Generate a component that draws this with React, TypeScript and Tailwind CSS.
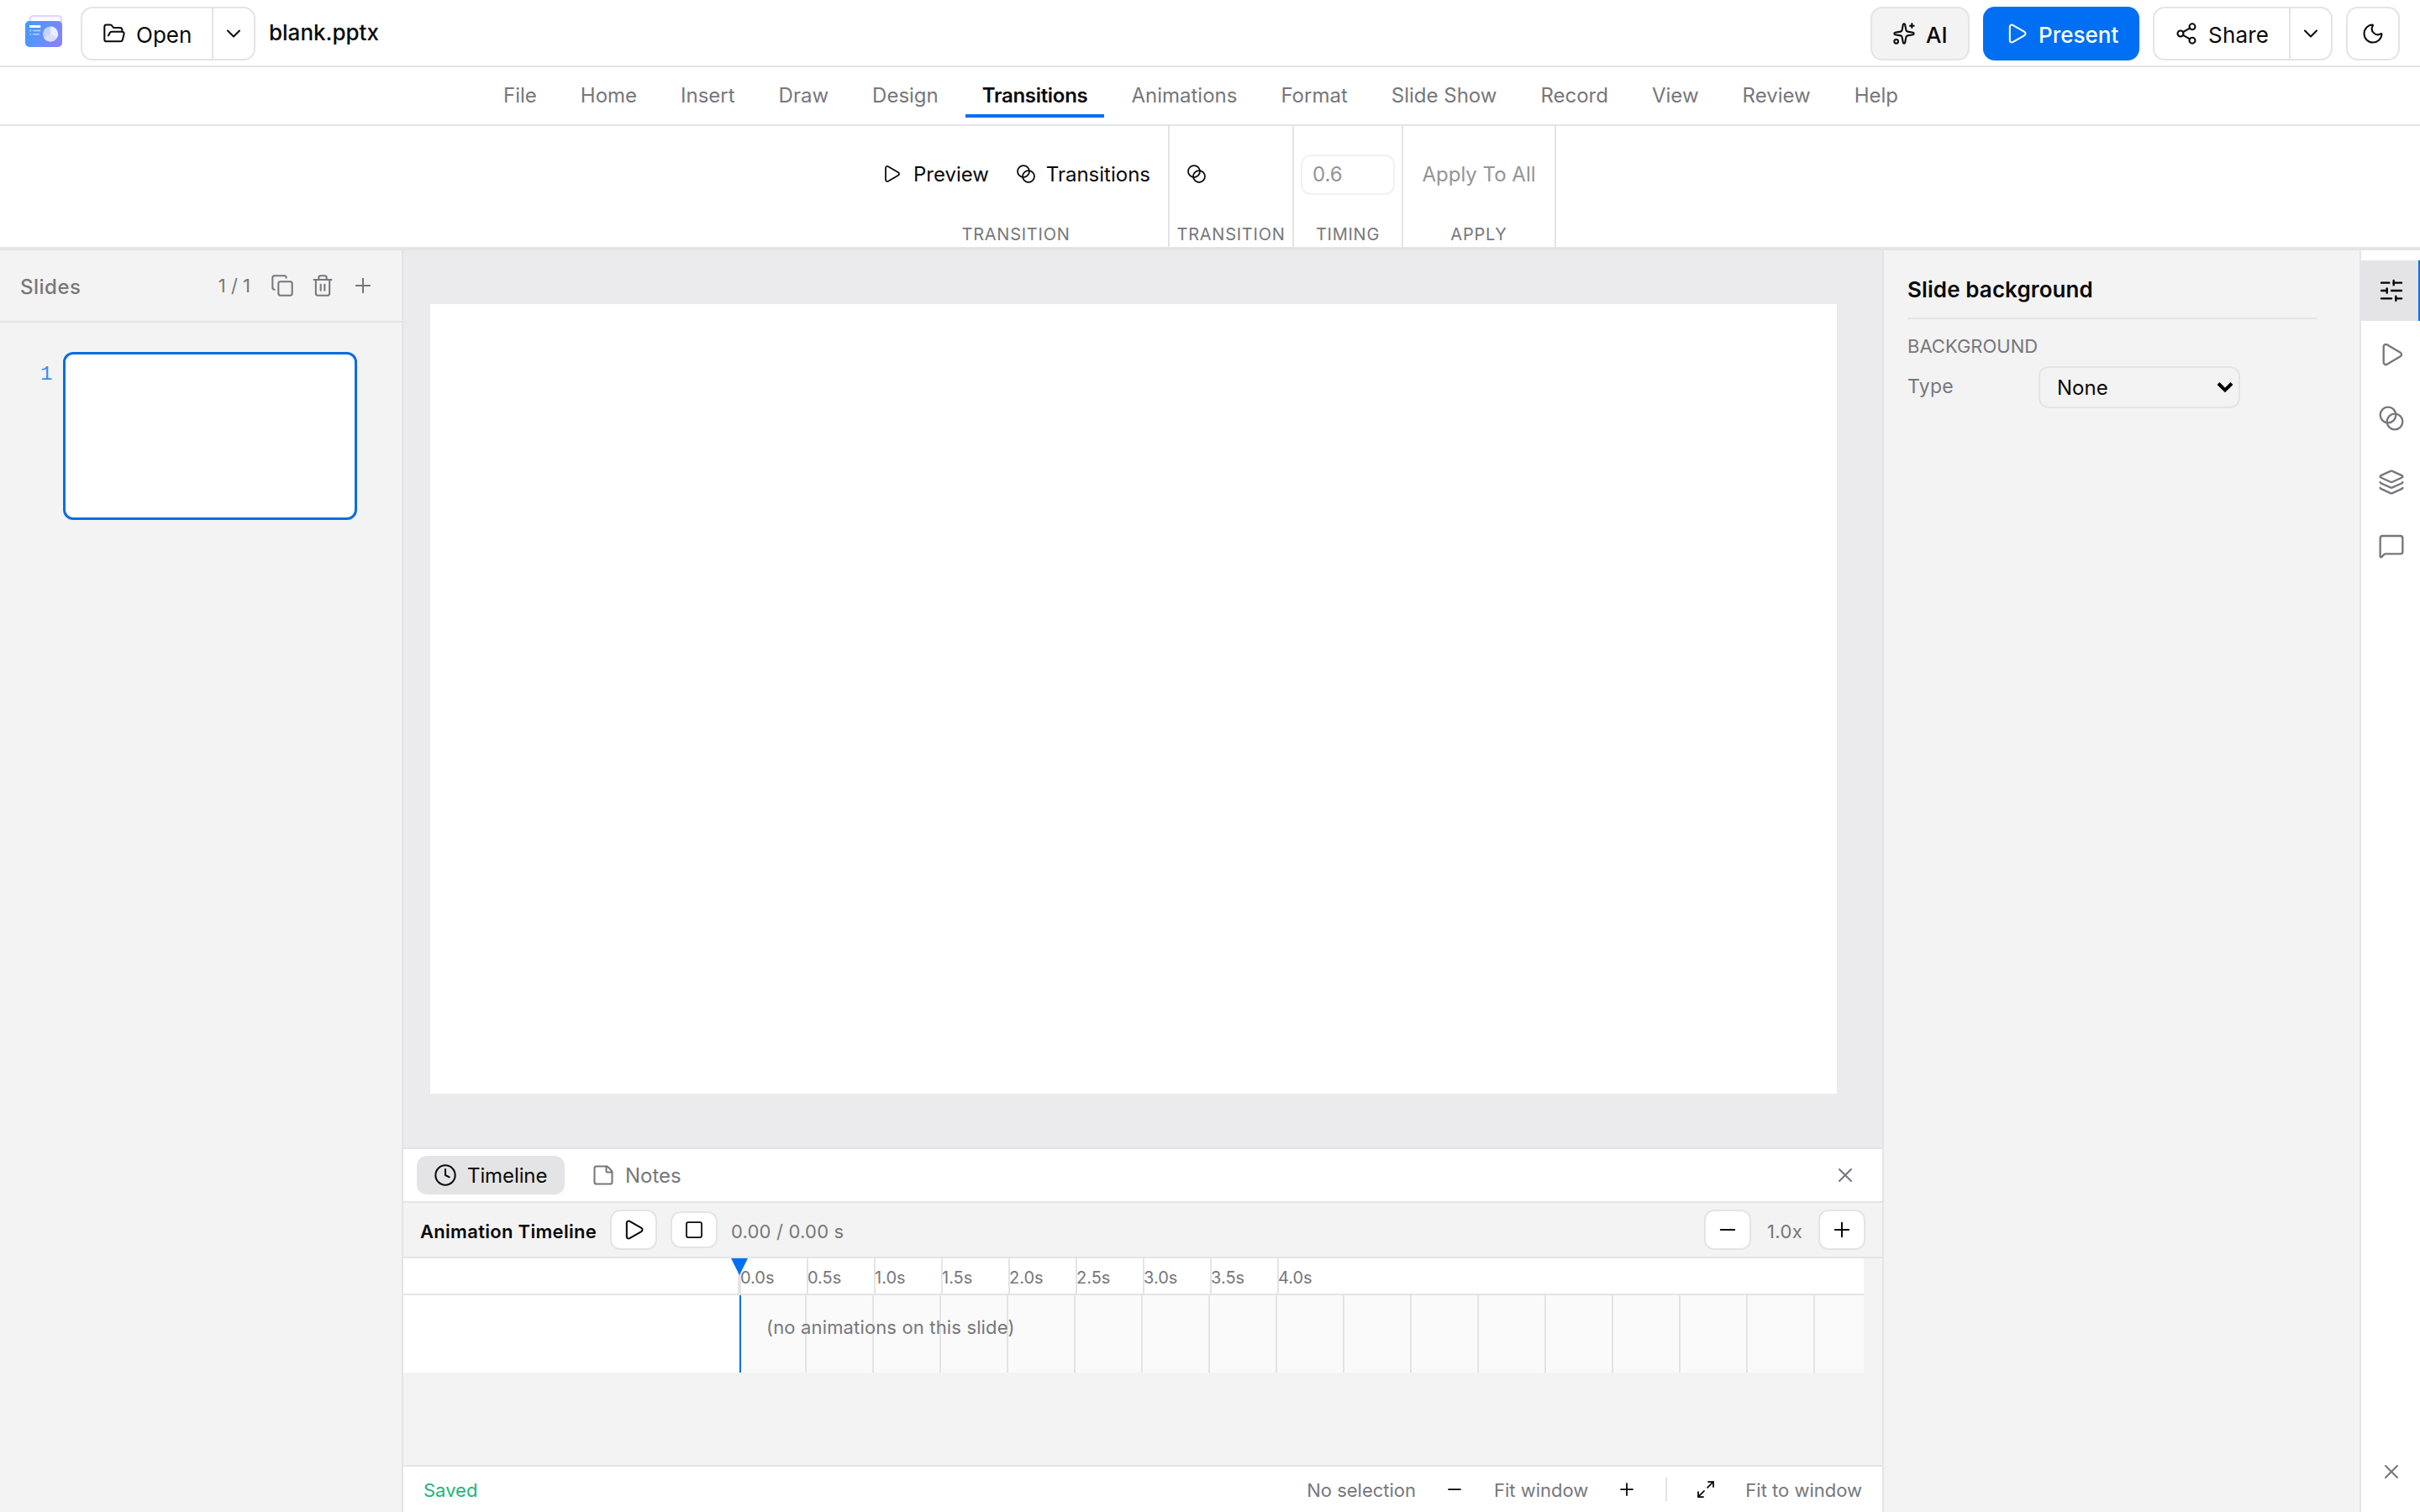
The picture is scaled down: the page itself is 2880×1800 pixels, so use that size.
import React from 'react'
import {
  Blend,
  ChevronDown,
  Clock,
  Copy,
  FolderOpen,
  Layers,
  Maximize2,
  MessageSquare,
  Minus,
  Moon,
  Play,
  Plus,
  Share2,
  SlidersHorizontal,
  Sparkles,
  Square,
  StickyNote,
  Trash2,
  X,
} from 'lucide-react'
import type { LucideIcon } from 'lucide-react'

const STROKE = 1.75

const TABS = [
  'File',
  'Home',
  'Insert',
  'Draw',
  'Design',
  'Transitions',
  'Animations',
  'Format',
  'Slide Show',
  'Record',
  'View',
  'Review',
  'Help',
]

const RULER_TICKS = ['0.0s', '0.5s', '1.0s', '1.5s', '2.0s', '2.5s', '3.0s', '3.5s', '4.0s']

const RAIL_ITEMS: { name: string; icon: LucideIcon }[] = [
  { name: 'properties', icon: SlidersHorizontal },
  { name: 'animations', icon: Play },
  { name: 'transitions', icon: Blend },
  { name: 'layers', icon: Layers },
  { name: 'comments', icon: MessageSquare },
]

function Logo() {
  return (
    <svg width="48" height="48" viewBox="0 0 48 48" fill="none">
      <defs>
        <linearGradient id="card" x1="2" y1="14" x2="46" y2="36" gradientUnits="userSpaceOnUse">
          <stop stopColor="#3d9dff" />
          <stop offset="1" stopColor="#8c80ff" />
        </linearGradient>
      </defs>
      <rect x="7.5" y="3" width="37.5" height="24" rx="4" stroke="#ddd3ff" strokeWidth="2" />
      <rect x="2" y="9" width="44" height="31" rx="5" fill="url(#card)" />
      <rect x="7" y="14" width="13.3" height="3" rx="0.6" fill="#fff" />
      <circle cx="8.3" cy="20.5" r="0.9" fill="#fff" opacity="0.7" />
      <circle cx="8.3" cy="24.8" r="0.9" fill="#fff" opacity="0.7" />
      <path d="M11 20.5h9.3M11 24.8h7.8" stroke="#fff" strokeWidth="1.5" opacity="0.6" />
      <circle cx="32" cy="24.5" r="9" fill="#c6d2ff" />
      <path d="M32 24.5V15.5a9 9 0 0 1 7.8 13.5z" fill="#eceeff" />
      <path d="M32 24.5l7.8 4.5a9 9 0 0 1-15.6 0z" fill="#d9deff" />
    </svg>
  )
}

function TopBar() {
  return (
    <header className="flex h-20 shrink-0 items-center border-b-2 border-[#e4e4e6] bg-white pt-0.5 pr-6 pl-7 text-[26px]">
      <Logo />
      <div className="ml-5 flex h-16 w-[208px] rounded-[14px] border-2 border-[#e4e4e6]">
        <button className="flex flex-1 items-center gap-3 pl-6">
          <FolderOpen size={28} strokeWidth={STROKE} />
          <span className="pt-0.5">Open</span>
        </button>
        <button className="flex w-[50px] items-center justify-center border-l-2 border-[#e4e4e6]">
          <ChevronDown size={28} strokeWidth={STROKE} />
        </button>
      </div>
      <span className="ml-4 pb-[3px] font-medium">blank.pptx</span>

      <div className="ml-auto flex items-center gap-4">
        <button className="flex h-16 w-[118px] items-center gap-3 rounded-[14px] border-2 border-[#e4e4e6] bg-[#f3f3f3] pl-6 font-medium">
          <Sparkles size={28} strokeWidth={STROKE} />
          <span className="pt-0.5">AI</span>
        </button>
        <button className="flex h-16 w-[186px] items-center gap-3 rounded-[14px] bg-[#006ff3] pl-[26px] font-medium text-white">
          <Play size={28} strokeWidth={STROKE} />
          <span className="pt-0.5">Present</span>
        </button>
        <div className="flex h-16 w-[214px] rounded-[14px] border-2 border-[#e4e4e6]">
          <button className="flex flex-1 items-center gap-3 pl-6">
            <Share2 size={28} strokeWidth={STROKE} />
            <span className="pt-0.5 tracking-[0.2px]">Share</span>
          </button>
          <button className="flex w-[50px] items-center justify-center border-l-2 border-[#e4e4e6]">
            <ChevronDown size={28} strokeWidth={STROKE} />
          </button>
        </div>
        <button className="flex size-16 items-center justify-center rounded-[14px] border-2 border-[#e4e4e6]">
          <Moon size={28} strokeWidth={STROKE} />
        </button>
      </div>
    </header>
  )
}

function TabBar() {
  return (
    <nav className="flex h-[70px] shrink-0 justify-center gap-3 border-b-2 border-[#e4e4e6] bg-white pr-[22px] text-2xl">
      {TABS.map((tab) =>
        tab === 'Transitions' ? (
          <button
            key={tab}
            className="flex h-[60px] items-center border-b-4 border-[#006ff3] px-5 pt-3 font-semibold tracking-[-0.3px]"
          >
            {tab}
          </button>
        ) : (
          <button key={tab} className="flex h-[60px] items-center border-b-4 border-transparent px-5 pt-3 text-[#77777b]">
            {tab}
          </button>
        ),
      )}
    </nav>
  )
}

// Column of controls with a caption underneath
const RibbonGroup = ({ label, className, children }: { label: string; className: string; children: React.ReactNode }) => (
  <section className={`flex h-full flex-col border-r-2 border-[#e4e4e6] ${className}`}>
    <div className="flex h-[114px] items-center">{children}</div>
    <p className="text-center text-xl leading-[30px] tracking-[0.75px] text-[#77777b]">{label}</p>
  </section>
)

function Ribbon() {
  return (
    <div className="flex h-[148px] shrink-0 justify-center border-b-4 border-[#e4e4e6] bg-white text-2xl">
      <RibbonGroup label="TRANSITION" className="w-[364px]">
        <button className="ml-[21px] flex items-center gap-3.5">
          <Play size={24} strokeWidth={STROKE} />
          <span className="pt-0.5">Preview</span>
        </button>
        <button className="ml-auto flex items-center gap-3 pr-[21px]">
          <Blend size={24} strokeWidth={STROKE} />
          <span className="pt-0.5">Transitions</span>
        </button>
      </RibbonGroup>
      <RibbonGroup label="TRANSITION" className="w-[148px]">
        <button className="ml-5">
          <Blend size={24} strokeWidth={STROKE} />
        </button>
      </RibbonGroup>
      <RibbonGroup label="TIMING" className="w-[130px] px-2">
        <div className="mt-0.5 flex h-12 w-28 items-center rounded-xl border-2 border-[#f1f1f2] px-3 text-[#949496]">0.6</div>
      </RibbonGroup>
      <RibbonGroup label="APPLY" className="w-[182px]">
        <button className="w-full pt-0.5 text-center text-[#949496]">Apply To All</button>
      </RibbonGroup>
    </div>
  )
}

function SlidesPanel() {
  return (
    <aside className="flex w-[480px] shrink-0 flex-col border-r-2 border-[#e4e4e6] bg-[#f3f3f3]">
      <div className="flex h-[86px] items-center border-b-2 border-[#e4e4e6] pr-8 pl-6 text-[#77777b]">
        <h2 className="pt-1 text-2xl font-medium tracking-[0.5px]">Slides</h2>
        <span className="mr-6 ml-auto text-[22px]">1 / 1</span>
        <div className="flex gap-5">
          <Copy size={28} strokeWidth={STROKE} />
          <Trash2 size={28} strokeWidth={STROKE} />
          <Plus size={28} strokeWidth={STROKE} />
        </div>
      </div>
      <div className="flex items-start gap-3 pt-[35px] pl-12">
        <span className="mt-[11px] w-[15px] font-['Liberation_Mono',monospace] text-2xl text-[#3b8df0]">1</span>
        <div className="h-[200px] w-[350px] rounded-xl border-3 border-[#0b6de0] bg-white"></div>
      </div>
    </aside>
  )
}

function TimelineRuler() {
  return (
    <div className="flex h-11 w-[1738px] border-b-2 border-[#e4e4e6] bg-white">
      <div className="relative w-[400px] border-r-2 border-[#e4e4e6]">
        {/* Playhead */}
        <svg className="absolute top-0 -right-3 z-10" width="20" height="20" viewBox="0 0 20 20">
          <path d="M0 0h20L10 20z" fill="#006ff3" />
        </svg>
      </div>
      {RULER_TICKS.map((tick) => (
        <div key={tick} className="w-20 border-l-2 border-[#e4e4e6]">
          <span className="-ml-px block pt-2 text-xl leading-[30px] text-[#77777b]">{tick}</span>
        </div>
      ))}
    </div>
  )
}

function TimelinePanel() {
  return (
    <section className="flex h-[378px] shrink-0 flex-col border-t-2 border-[#e4e4e6]">
      <div className="flex h-16 items-center gap-3 border-b-2 border-[#e4e4e6] bg-white px-4 text-2xl">
        <button className="flex h-[46px] w-44 items-center gap-3 rounded-xl bg-[#e4e4e6] pl-5">
          <Clock size={28} strokeWidth={STROKE} />
          <span className="pt-0.5 tracking-[-0.1px]">Timeline</span>
        </button>
        <button className="flex h-[46px] items-center gap-3 px-5 text-[#77777b]">
          <StickyNote size={28} strokeWidth={STROKE} />
          <span className="pt-0.5">Notes</span>
        </button>
        <X className="mr-3.5 ml-auto text-[#77777b]" size={28} strokeWidth={STROKE} />
      </div>

      <div className="flex h-[66px] items-center border-b-2 border-[#e4e4e6] px-5 text-[22px]">
        <h3 className="w-[226px] pt-1 font-semibold tracking-[0.3px]">Animation Timeline</h3>
        <button className="flex h-12 w-14 items-center justify-center rounded-xl border-2 border-[#e4e4e6] bg-white">
          <Play size={28} strokeWidth={STROKE} />
        </button>
        <button className="ml-4 flex h-11 w-14 items-center justify-center rounded-xl border-2 border-[#e4e4e6] bg-white">
          <Square size={24} strokeWidth={STROKE} />
        </button>
        <span className="ml-4 pt-1 tracking-[0.2px] text-[#77777b]">0.00 / 0.00 s</span>
        <button className="ml-auto flex h-12 w-14 items-center justify-center rounded-xl border-2 border-[#e4e4e6] bg-white">
          <Minus size={28} strokeWidth={STROKE} />
        </button>
        <span className="w-20 pt-1 text-center tracking-[0.4px] text-[#77777b]">1.0x</span>
        <button className="flex h-12 w-14 items-center justify-center rounded-xl border-2 border-[#e4e4e6] bg-white">
          <Plus size={28} strokeWidth={STROKE} />
        </button>
      </div>

      <TimelineRuler />
      <div className="flex h-[92px] w-[1738px]">
        <div className="w-[400px] bg-white"></div>
        <div className="flex flex-1 border-l-2 border-[#0b6de0] bg-[#fafafa] bg-[repeating-linear-gradient(to_right,transparent_0_78px,#e4e4e6_78px_80px)] bg-origin-border">
          <p className="pt-[22px] pl-[30px] text-[22px] tracking-[0.15px] text-[#77777b]">(no animations on this slide)</p>
        </div>
      </div>
    </section>
  )
}

function StatusBar() {
  return (
    <footer className="flex h-14 shrink-0 items-center border-t-2 border-[#e4e4e6] bg-white px-6 text-[22px] text-[#77777b]">
      <span className="pt-0.5 text-[#1fb47c]">Saved</span>
      <span className="ml-auto pt-0.5">No selection</span>
      <Minus className="mr-[35px] ml-[34px] text-black" size={24} strokeWidth={STROKE} />
      <span className="pt-0.5">Fit window</span>
      <Plus className="mr-8 ml-[34px] text-black" size={24} strokeWidth={STROKE} />
      <div className="ml-0.5 h-7 w-0.5 bg-[#e4e4e6]"></div>
      <Maximize2 className="mr-[35px] ml-[34px] text-black" size={24} strokeWidth={STROKE} />
      <span className="pt-0.5">Fit to window</span>
    </footer>
  )
}

function PropertiesPanel() {
  return (
    <aside className="w-[570px] shrink-0 border-x-2 border-[#e4e4e6] bg-[#f3f3f3] pl-7">
      <h2 className="flex h-[82px] w-[488px] items-center border-b-2 border-[#e4e4e6] pt-3 text-[26px] font-semibold tracking-[0.1px]">
        Slide background
      </h2>
      <p className="pt-[17px] text-[22px] leading-[30px] text-[#77777b]">BACKGROUND</p>
      <div className="mt-[9px] flex items-center">
        <span className="w-[156px] pb-0.5 text-[23px] tracking-[0.3px] text-[#77777b]">Type</span>
        <div className="flex h-[50px] w-60 items-center justify-between rounded-xl border-2 border-[#e4e4e6] pr-1.5 pl-5 text-2xl">
          <span className="pt-0.5">None</span>
          <svg width="20" height="14" viewBox="0 0 20 14" fill="none">
            <path d="M2 2.5l8 8 8-8" stroke="#000" strokeWidth="4" />
          </svg>
        </div>
      </div>
    </aside>
  )
}

function ToolRail() {
  return (
    <div className="flex flex-1 flex-col gap-1 bg-white pt-3 text-[#77777b]">
      {RAIL_ITEMS.map(({ name, icon: Icon }, i) =>
        i === 0 ? (
          <button key={name} className="flex h-18 items-center border-r-2 border-[#006ff3] bg-[#e4e4e6] pl-5 text-black">
            <Icon size={32} strokeWidth={STROKE} />
          </button>
        ) : (
          <button key={name} className="flex h-18 items-center pl-5">
            <Icon size={32} strokeWidth={STROKE} />
          </button>
        ),
      )}
      <X className="mt-auto mb-[34px] ml-[22px]" size={28} strokeWidth={STROKE} />
    </div>
  )
}

export default function App() {
  return (
    <div className="flex h-[1800px] w-[2880px] flex-col overflow-hidden bg-white font-[Inter,sans-serif] text-[#0a0a0a]">
      <TopBar />
      <TabBar />
      <Ribbon />
      <div className="flex min-h-0 flex-1">
        <SlidesPanel />
        <main className="flex w-[1760px] shrink-0 flex-col bg-[#f3f3f3]">
          <div className="flex-1 bg-[#ebebee] px-8 pt-16">
            <div className="h-[940px] w-[1674px] bg-white"></div>
          </div>
          <TimelinePanel />
          <StatusBar />
        </main>
        <PropertiesPanel />
        <ToolRail />
      </div>
    </div>
  )
}
